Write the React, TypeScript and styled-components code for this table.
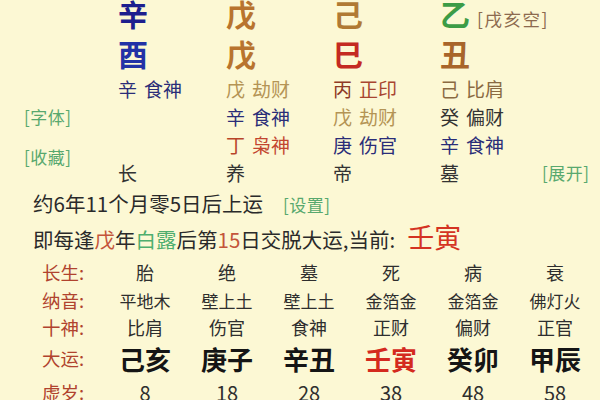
import React from "react";
import styled, { createGlobalStyle } from "styled-components";

const Global = createGlobalStyle`
  html, body {
    margin: 0;
    padding: 0;
    background: #fcf8d4;
    font-family: "Noto Sans CJK SC", "Noto Sans", sans-serif;
    color: #2b2b2b;
  }
  #root { width: 600px; height: 400px; overflow: hidden; }
`;

const Page = styled.div`
  width: 600px;
  height: 400px;
  background: #fcf8d4;
  overflow: hidden;
  display: flex;
  flex-direction: column;
`;

const Top = styled.div`
  display: flex;
  padding-left: 24px;
`;

const SideCol = styled.div<{ $w: number; $pt: number }>`
  width: ${(p) => p.$w}px;
  padding-top: ${(p) => p.$pt}px;
  display: flex;
  flex-direction: column;
  gap: 12px;
`;

const SideLink = styled.span`
  font-size: 17px;
  line-height: 28px;
  color: #58a86e;
  white-space: nowrap;
  letter-spacing: 0.5px;
`;

const Pillar = styled.div<{ $w: number }>`
  width: ${(p) => p.$w}px;
  display: flex;
  flex-direction: column;
`;

const Stem = styled.div<{ $c: string }>`
  height: 26px;
  line-height: 26px;
  font-size: 30px;
  font-weight: 700;
  color: ${(p) => p.$c};
  white-space: nowrap;
`;

const Kong = styled.span`
  font-size: 17.5px;
  font-weight: 400;
  color: #8c6a4e;
  margin-left: 7px;
  letter-spacing: 1.5px;
`;

const Branch = styled(Stem)`
  margin-top: 14px;
`;

const HiddenList = styled.div`
  margin-top: 9px;
  height: 84px;
  display: flex;
  flex-direction: column;
`;

const HiddenRow = styled.div`
  height: 28px;
  line-height: 28px;
  font-size: 19px;
  white-space: nowrap;
  display: flex;
  gap: 7px;
`;

const Tone = styled.span<{ $c: string }>`
  color: ${(p) => p.$c};
`;

const Phase = styled.div`
  height: 28px;
  line-height: 28px;
  font-size: 19px;
  color: #333;
`;

const Info = styled.div`
  padding-left: 33px;
  display: flex;
  flex-direction: column;
`;

const InfoLine = styled.div`
  height: 33px;
  line-height: 33px;
  font-size: 20.5px;
  color: #2a2a2a;
  white-space: nowrap;
  display: flex;
  align-items: baseline;
`;

const Setting = styled(SideLink)`
  margin-left: 20px;
  line-height: 33px;
`;

const Big = styled.span`
  font-size: 27px;
  color: #d43322;
  margin-left: 12px;
`;

const Table = styled.div`
  margin-top: 5px;
  padding-left: 42px;
  display: grid;
  grid-template-columns: 62px repeat(6, 82px);
  grid-template-rows: 28px 28px 25px 38px 30px;
  align-items: center;
`;

const Label = styled.div`
  font-size: 18.5px;
  color: #b0432e;
  white-space: nowrap;
`;

const Cell = styled.div<{ $size: number; $bold?: boolean; $c?: string }>`
  text-align: center;
  font-size: ${(p) => p.$size}px;
  font-weight: ${(p) => (p.$bold ? 700 : 400)};
  color: ${(p) => p.$c || "#2e2e2e"};
  white-space: nowrap;
`;

type H = { s: string; sc: string; g: string; gc: string };
type P = { stem: string; sc: string; branch: string; bc: string; hidden: H[]; phase: string; kong?: boolean; w: number };

const NAVY = "#2a2d78";
const TAN = "#b49455";

const pillars: P[] = [
  {
    stem: "辛", sc: "#1d1f8e", branch: "酉", bc: "#2232a6", w: 108,
    hidden: [{ s: "辛", sc: NAVY, g: "食神", gc: NAVY }],
    phase: "长",
  },
  {
    stem: "戊", sc: "#b8742e", branch: "戊", bc: "#b8742e", w: 107,
    hidden: [
      { s: "戊", sc: TAN, g: "劫财", gc: TAN },
      { s: "辛", sc: NAVY, g: "食神", gc: NAVY },
      { s: "丁", sc: "#b8452a", g: "枭神", gc: "#c2452f" },
    ],
    phase: "养",
  },
  {
    stem: "己", sc: "#b07a34", branch: "巳", bc: "#c42a22", w: 107,
    hidden: [
      { s: "丙", sc: "#8e3a26", g: "正印", gc: "#a84530" },
      { s: "戊", sc: TAN, g: "劫财", gc: TAN },
      { s: "庚", sc: NAVY, g: "伤官", gc: NAVY },
    ],
    phase: "帝",
  },
  {
    stem: "乙", sc: "#3c9c46", branch: "丑", bc: "#a8652a", kong: true, w: 102,
    hidden: [
      { s: "己", sc: "#8a6a42", g: "比肩", gc: "#8a6a42" },
      { s: "癸", sc: "#333", g: "偏财", gc: "#333" },
      { s: "辛", sc: NAVY, g: "食神", gc: NAVY },
    ],
    phase: "墓",
  },
];

const rows: { label: string; size: number; bold?: boolean; values: string[] }[] = [
  { label: "长生:", size: 18, values: ["胎", "绝", "墓", "死", "病", "衰"] },
  { label: "纳音:", size: 17, values: ["平地木", "壁上土", "壁上土", "金箔金", "金箔金", "佛灯火"] },
  { label: "十神:", size: 18, values: ["比肩", "伤官", "食神", "正财", "偏财", "正官"] },
  { label: "大运:", size: 26, bold: true, values: ["己亥", "庚子", "辛丑", "壬寅", "癸卯", "甲辰"] },
  { label: "虚岁:", size: 20, values: ["8", "18", "28", "38", "48", "58"] },
];

export default function App() {
  return (
    <Page>
      <Global />
      <Top>
        <SideCol $w={94} $pt={103}>
          <SideLink>[字体]</SideLink>
          <SideLink>[收藏]</SideLink>
        </SideCol>
        {pillars.map((p, i) => (
          <Pillar key={i} $w={p.w}>
            <Stem $c={p.sc}>
              {p.stem}
              {p.kong && <Kong>[戌亥空]</Kong>}
            </Stem>
            <Branch $c={p.bc}>{p.branch}</Branch>
            <HiddenList>
              {p.hidden.map((h, j) => (
                <HiddenRow key={j}>
                  <Tone $c={h.sc}>{h.s}</Tone>
                  <Tone $c={h.gc}>{h.g}</Tone>
                </HiddenRow>
              ))}
            </HiddenList>
            <Phase>{p.phase}</Phase>
          </Pillar>
        ))}
        <SideCol $w={54} $pt={159}>
          <SideLink>[展开]</SideLink>
        </SideCol>
      </Top>
      <Info>
        <InfoLine>
          约6年11个月零5日后上运<Setting>[设置]</Setting>
        </InfoLine>
        <InfoLine>
          即每逢<Tone $c="#c4553a">戊</Tone>年<Tone $c="#4fae6e">白露</Tone>后第
          <Tone $c="#c4553a">15</Tone>日交脱大运,当前:<Big>壬寅</Big>
        </InfoLine>
      </Info>
      <Table>
        {rows.map((r) => (
          <React.Fragment key={r.label}>
            <Label>{r.label}</Label>
            {r.values.map((v, k) => (
              <Cell
                key={k}
                $size={r.size}
                $bold={r.bold}
                $c={r.bold ? (v === "壬寅" ? "#d42a1e" : "#151515") : undefined}
              >
                {v}
              </Cell>
            ))}
          </React.Fragment>
        ))}
      </Table>
    </Page>
  );
}
